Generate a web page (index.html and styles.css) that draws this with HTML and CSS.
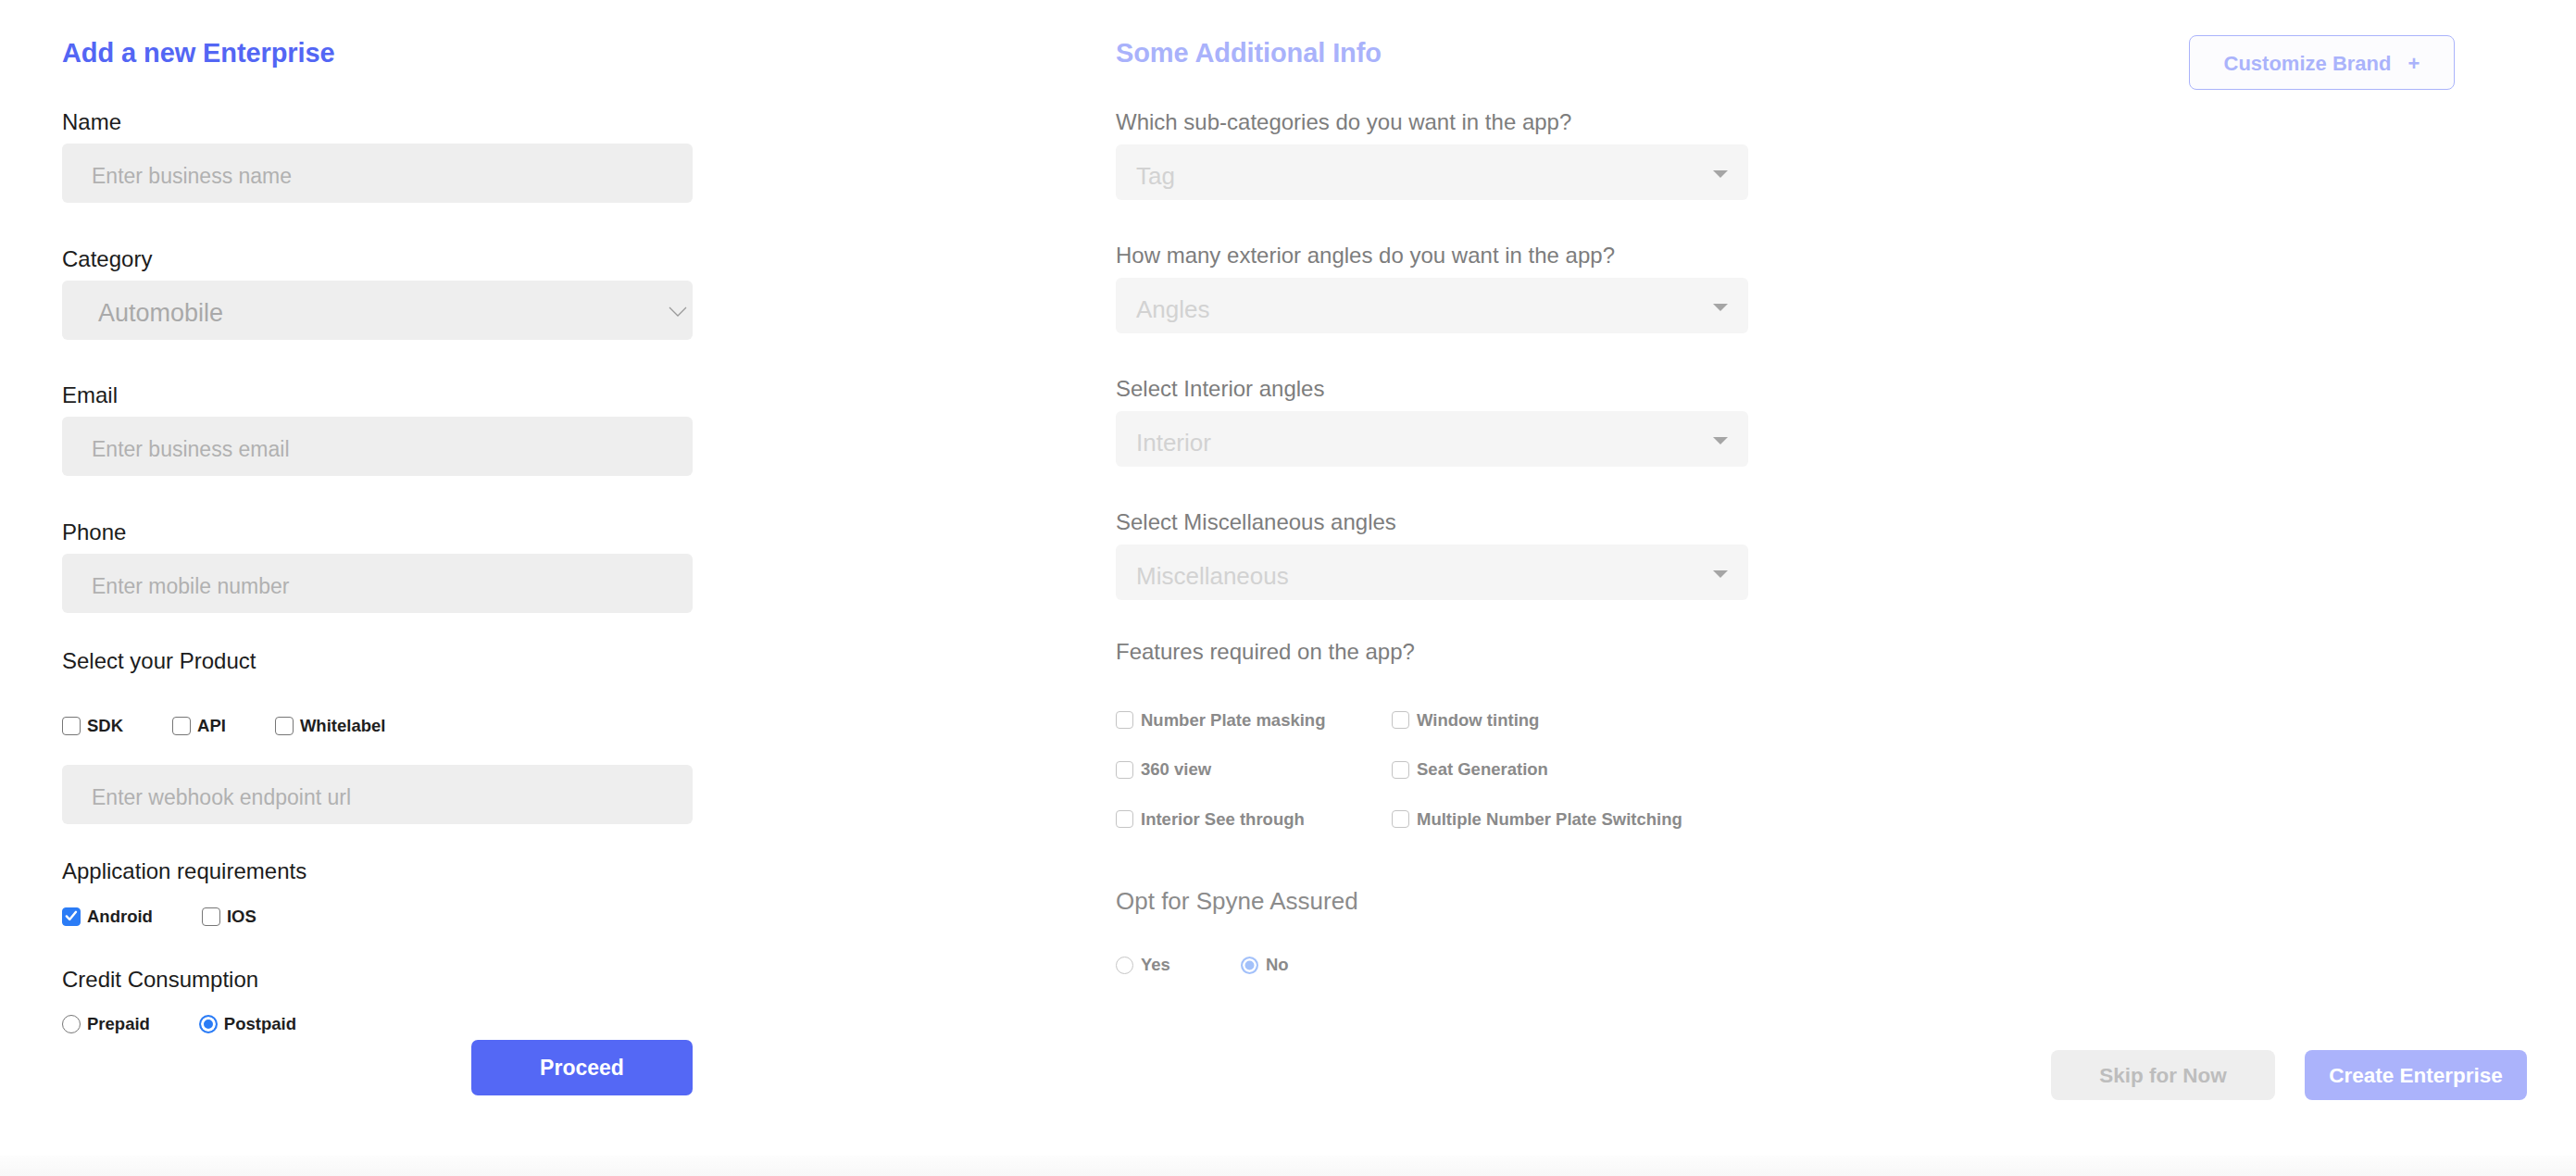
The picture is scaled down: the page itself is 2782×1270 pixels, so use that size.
FILE: index.html
```html
<!DOCTYPE html>
<html lang="en">
<head>
<meta charset="utf-8">
<title>Add a new Enterprise</title>
<link rel="stylesheet" href="styles.css">
</head>
<body>
<div class="page">
  <section class="col-left">
    <h1 class="title">Add a new Enterprise</h1>

    <div class="field first">
      <div class="label">Name</div>
      <div class="input"><span class="ph">Enter business name</span></div>
    </div>

    <div class="field">
      <div class="label">Category</div>
      <div class="input select"><span class="sel-val">Automobile</span>
        <svg class="chev" width="20" height="11" viewBox="0 0 20 11"><polyline points="1,1 10,10 19,1" fill="none" stroke="#9a9a9a" stroke-width="1.3"/></svg>
      </div>
    </div>

    <div class="field">
      <div class="label">Email</div>
      <div class="input"><span class="ph">Enter business email</span></div>
    </div>

    <div class="field">
      <div class="label">Phone</div>
      <div class="input"><span class="ph">Enter mobile number</span></div>
    </div>

    <div class="label product-label">Select your Product</div>
    <div class="check-row product-row">
      <div class="opt"><span class="cb"></span><span class="opt-text">SDK</span></div>
      <div class="opt"><span class="cb"></span><span class="opt-text">API</span></div>
      <div class="opt"><span class="cb"></span><span class="opt-text">Whitelabel</span></div>
    </div>
    <div class="input webhook"><span class="ph">Enter webhook endpoint url</span></div>

    <div class="label app-label">Application requirements</div>
    <div class="check-row app-row">
      <div class="opt"><span class="cb checked"><svg width="20" height="20" viewBox="0 0 20 20"><path d="M4.8 10.4l3.4 3.6 6.8-8.2" fill="none" stroke="#fff" stroke-width="2.4" stroke-linecap="round" stroke-linejoin="round"/></svg></span><span class="opt-text">Android</span></div>
      <div class="opt"><span class="cb"></span><span class="opt-text">IOS</span></div>
    </div>

    <div class="label credit-label">Credit Consumption</div>
    <div class="check-row credit-row">
      <div class="opt"><span class="rd"></span><span class="opt-text">Prepaid</span></div>
      <div class="opt"><span class="rd on"></span><span class="opt-text">Postpaid</span></div>
    </div>

    <button class="btn-proceed">Proceed</button>
  </section>

  <section class="col-right">
    <div class="right-top">
      <div class="info">
        <h2 class="title light">Some Additional Info</h2>

        <div class="rfield first">
          <div class="label gray">Which sub-categories do you want in the app?</div>
          <div class="rselect"><span class="rsel-val">Tag</span><span class="tri"></span></div>
        </div>
        <div class="rfield">
          <div class="label gray">How many exterior angles do you want in the app?</div>
          <div class="rselect"><span class="rsel-val">Angles</span><span class="tri"></span></div>
        </div>
        <div class="rfield">
          <div class="label gray">Select Interior angles</div>
          <div class="rselect"><span class="rsel-val">Interior</span><span class="tri"></span></div>
        </div>
        <div class="rfield">
          <div class="label gray">Select Miscellaneous angles</div>
          <div class="rselect"><span class="rsel-val">Miscellaneous</span><span class="tri"></span></div>
        </div>

        <div class="label gray features-label">Features required on the app?</div>
        <div class="features">
          <div class="opt"><span class="cb dim"></span><span class="opt-text dimtext">Number Plate masking</span></div>
          <div class="opt"><span class="cb dim"></span><span class="opt-text dimtext">Window tinting</span></div>
          <div class="opt"><span class="cb dim"></span><span class="opt-text dimtext">360 view</span></div>
          <div class="opt"><span class="cb dim"></span><span class="opt-text dimtext">Seat Generation</span></div>
          <div class="opt"><span class="cb dim"></span><span class="opt-text dimtext">Interior See through</span></div>
          <div class="opt"><span class="cb dim"></span><span class="opt-text dimtext">Multiple Number Plate Switching</span></div>
        </div>

        <div class="assured-label">Opt for Spyne Assured</div>
        <div class="assured-row">
          <div class="opt"><span class="rd dim"></span><span class="opt-text dimtext">Yes</span></div>
          <div class="opt"><span class="rd dim-on"></span><span class="opt-text dimtext">No</span></div>
        </div>
      </div>

      <button class="btn-brand">Customize Brand <span class="plus">+</span></button>
    </div>

    <div class="actions">
      <button class="btn-skip">Skip for Now</button>
      <button class="btn-create">Create Enterprise</button>
    </div>
  </section>
</div>
<div class="bottom-band"></div>
</body>
</html>
```

FILE: styles.css
```css
html, body {
  margin: 0;
  padding: 0;
  background: #ffffff;
}

body {
  font-family: "Liberation Sans", Arial, sans-serif;
  color: #1c1c1c;
  overflow: hidden;
}

.page {
  display: flex;
  align-items: flex-start;
  height: 1248px;
  box-sizing: border-box;
  padding: 39px 0 0 67px;
}

/* ---------- titles & labels ---------- */
.title {
  margin: 0;
  font-size: 29px;
  line-height: 36px;
  font-weight: 700;
  color: #5366f4;
  letter-spacing: -0.1px;
}

.title.light {
  color: #a9b2fb;
}

.label {
  font-size: 24px;
  line-height: 30px;
  color: #1c1c1c;
  white-space: nowrap;
}

.label.gray {
  color: #7d7d7d;
}

/* ---------- left column ---------- */
.col-left {
  width: 681px;
  display: flex;
  flex-direction: column;
}

.field {
  margin-top: 45.5px;
}

.field.first {
  margin-top: 42px;
}

.input {
  margin-top: 8px;
  height: 64px;
  box-sizing: border-box;
  padding: 6px 0 0 32px;
  background: #eeeeee;
  border-radius: 6px;
  line-height: 58px;
  display: flex;
  align-items: flex-start;
}

.ph {
  font-size: 23px;
  color: #b1b1b1;
  white-space: nowrap;
}

.input.select {
  padding: 7px 0 0 39px;
  line-height: 57px;
  position: relative;
}

.sel-val {
  font-size: 27px;
  color: #a9a9a9;
}

.chev {
  position: absolute;
  right: 6px;
  top: 28px;
}

.product-label {
  margin-top: 37px;
}

.check-row {
  display: flex;
  align-items: center;
  gap: 53px;
  height: 20px;
}

.product-row {
  margin-top: 45px;
}

.input.webhook {
  margin-top: 32px;
}

.app-label {
  margin-top: 36.5px;
}

.app-row {
  margin-top: 23.5px;
}

.credit-label {
  margin-top: 43.5px;
}

.credit-row {
  margin-top: 22.5px;
}

.opt {
  display: flex;
  align-items: center;
  gap: 7px;
}

.opt-text {
  font-size: 18.5px;
  font-weight: 700;
  color: #1e1e1e;
  line-height: 20px;
  white-space: nowrap;
}

.cb {
  width: 20px;
  height: 20px;
  box-sizing: border-box;
  border: 1.5px solid #767676;
  border-radius: 4px;
  background: #ffffff;
  flex: none;
  display: block;
  position: relative;
}

.cb.checked {
  background: #2b7cf6;
  border-color: #2b7cf6;
}

.cb.checked svg {
  position: absolute;
  left: -1.5px;
  top: -1.5px;
}

.rd {
  width: 20px;
  height: 20px;
  box-sizing: border-box;
  border: 1.5px solid #767676;
  border-radius: 50%;
  background: #ffffff;
  flex: none;
  display: block;
}

.rd.on {
  border: 2px solid #2b7cf6;
  background: #2b7cf6;
  box-shadow: inset 0 0 0 3px #ffffff;
}

.btn-proceed {
  align-self: flex-end;
  margin-top: 7px;
  width: 239px;
  height: 60px;
  border: none;
  border-radius: 7px;
  background: #5468f5;
  color: #ffffff;
  font-family: "Liberation Sans", Arial, sans-serif;
  font-size: 23px;
  font-weight: 700;
  padding: 2px 0 0;
  cursor: pointer;
}

/* ---------- right column ---------- */
.col-right {
  flex: 1;
  margin-left: 457px;
  display: flex;
  flex-direction: column;
}

.right-top {
  display: flex;
  align-items: flex-start;
}

.info {
  width: 683px;
  display: flex;
  flex-direction: column;
}

.rfield {
  margin-top: 45px;
}

.rfield.first {
  margin-top: 42px;
}

.rselect {
  margin-top: 8.5px;
  height: 60.5px;
  box-sizing: border-box;
  padding: 8px 22px 0 22px;
  background: #f5f5f5;
  border-radius: 6px;
  display: flex;
  align-items: flex-start;
  justify-content: space-between;
  line-height: 52.5px;
}

.rsel-val {
  font-size: 26px;
  color: #d2d2d2;
  white-space: nowrap;
}

.tri {
  width: 0;
  height: 0;
  border-left: 8.5px solid transparent;
  border-right: 8.5px solid transparent;
  border-top: 8.5px solid #a5a5a5;
  margin-top: 20px;
}

.features-label {
  margin-top: 40.5px;
}

.features {
  margin-top: 49px;
  display: grid;
  grid-template-columns: 298px auto;
  row-gap: 33.5px;
}

.features .opt,
.assured-row .opt {
  gap: 8px;
  height: 20px;
}

.cb.dim {
  width: 19px;
  height: 19px;
  border-color: #c4c4c4;
}

.dimtext {
  color: #8a8a8a;
}

.assured-label {
  margin-top: 62px;
  font-size: 26px;
  line-height: 32px;
  color: #8b8b8b;
  white-space: nowrap;
}

.assured-row {
  margin-top: 43.5px;
  display: grid;
  grid-template-columns: 135px auto;
}

.rd.dim {
  width: 19px;
  height: 19px;
  border-color: #c6c6c6;
}

.rd.dim-on {
  width: 19px;
  height: 19px;
  border: 2px solid #a3c1fa;
  background: #a3c1fa;
  box-shadow: inset 0 0 0 2.5px #ffffff;
}

.btn-brand {
  margin-left: auto;
  margin-right: 131px;
  margin-top: -1px;
  width: 287px;
  height: 59px;
  box-sizing: border-box;
  border: 1.5px solid #aab3fb;
  border-radius: 8px;
  background: #fcfcfe;
  color: #aab3fb;
  font-family: "Liberation Sans", Arial, sans-serif;
  font-size: 22px;
  font-weight: 700;
  padding: 2px 0 0 0;
  white-space: nowrap;
  cursor: pointer;
}

.btn-brand .plus {
  margin-left: 12px;
}

.actions {
  display: flex;
  justify-content: flex-end;
  gap: 32px;
  padding-right: 53px;
  margin-top: 81.5px;
}

.btn-skip,
.btn-create {
  height: 54px;
  border: none;
  border-radius: 8px;
  font-family: "Liberation Sans", Arial, sans-serif;
  font-size: 22.5px;
  font-weight: 700;
  padding: 2px 0 0;
  cursor: pointer;
}

.btn-skip {
  width: 242px;
  background: #eeeeee;
  color: #bdbdbd;
}

.btn-create {
  width: 240px;
  background: #abb3fb;
  color: #ffffff;
}

.bottom-band {
  height: 22px;
  background: linear-gradient(#fdfdfd, #f8f8f8);
}
```
